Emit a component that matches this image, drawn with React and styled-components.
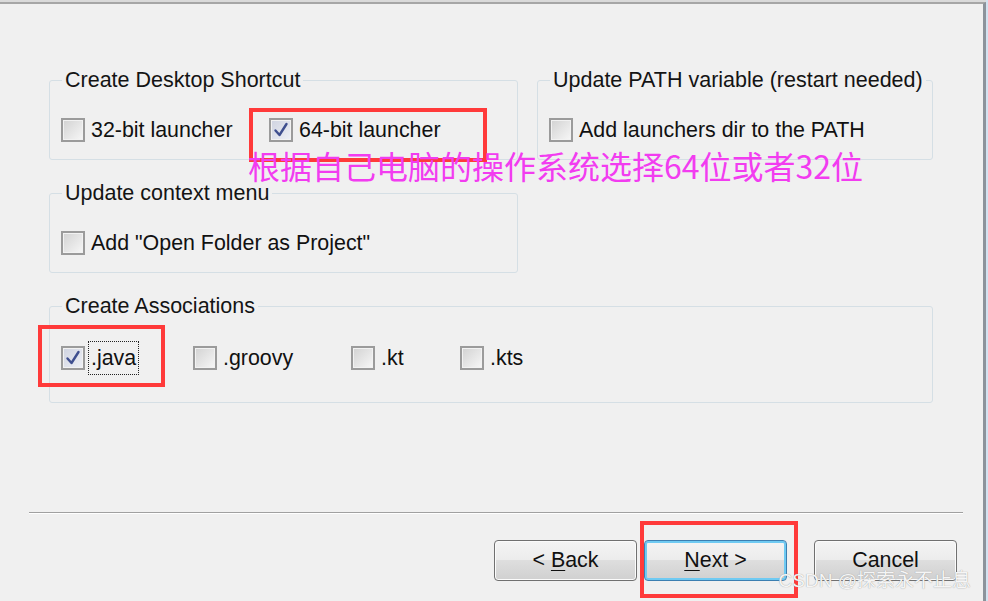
import React from "react";
import styled, { createGlobalStyle, css } from "styled-components";

const GlobalStyle = createGlobalStyle`
  html, body {
    margin: 0;
    padding: 0;
    background: #f0f0f0;
  }
  body {
    font-family: "Liberation Sans", Arial, sans-serif;
  }
`;

// red annotation frame drawn over an item
const marked = css`
  ${props => props.$mark && css`
    &::after {
      content: "";
      position: absolute;
      left: ${props.$mark[0]}px;
      top: ${props.$mark[1]}px;
      width: ${props.$mark[2]}px;
      height: ${props.$mark[3]}px;
      border: 4px solid #ff3a3a;
      box-sizing: border-box;
      pointer-events: none;
    }
  `}
`;

const Frame = styled.div`
  width: 988px;
  height: 601px;
  box-sizing: border-box;
  padding: 2px 2px 0 0;
  background: #d3e2f0;
  display: flex;
  overflow: hidden;
`;

const Window = styled.div`
  position: relative;
  flex: 1;
  display: flex;
  flex-direction: column;
  background: #f0f0f0;
  border-top: 2px solid #a6a6a6;
  border-right: 3px solid #8c939b;
  box-shadow: 0 -2px 0 #dadada;
`;

const Body = styled.div`
  padding: 64px 0 0 49px;
`;

const Groups = styled.div`
  display: grid;
  grid-template-columns: 469px 396px;
  column-gap: 19px;
  row-gap: 21px;
  align-items: start;
`;

const Group = styled.fieldset`
  margin: 0;
  min-width: 0;
  padding: ${props => props.$pad || "21px 11px 12px"};
  border: 1px solid #d5dfe5;
  border-radius: 3px;
  ${props => props.$wide && "grid-column: 1 / -1;"}
`;

const Legend = styled.legend`
  padding: 0 3px;
  margin-left: 1px;
  font-size: 21.5px;
  line-height: 24px;
  color: #141414;
  white-space: nowrap;
`;

const Options = styled.div`
  display: flex;
  align-items: center;
  height: 34px;
`;

const Option = styled.label`
  position: relative;
  display: flex;
  align-items: center;
  flex-shrink: 0;
  height: 34px;
  width: ${props => (props.$w ? `${props.$w}px` : "auto")};
  ${marked}
`;

const Box = styled.span`
  width: 24px;
  height: 24px;
  box-sizing: border-box;
  flex-shrink: 0;
  display: flex;
  align-items: center;
  justify-content: center;
  border: 2px solid #9b9b9b;
  box-shadow: inset 0 0 0 1px #f2f2f2;
  background: ${props =>
    props.$checked
      ? "linear-gradient(135deg, #cfd3e0, #eef0f6)"
      : "linear-gradient(135deg, #d2d2d2, #f7f7f7)"};
`;

const Text = styled.span`
  margin-left: 3px;
  padding: 0 2px;
  height: 32px;
  line-height: 32px;
  border: 1px dotted ${props => (props.$focus ? "#222" : "transparent")};
  font-size: 21.4px;
  color: #111;
  white-space: nowrap;
`;

const Footer = styled.div`
  margin-top: auto;
  display: flex;
  flex-direction: column;
`;

const Divider = styled.div`
  margin: 0 20px 0 29px;
  border-top: 1px solid #a0a0a0;
  border-bottom: 1px solid #ffffff;
`;

const ButtonRow = styled.div`
  display: flex;
  justify-content: flex-end;
  gap: 7px;
  margin: 26px 26px 20px 0;
`;

const Button = styled.button`
  position: relative;
  width: 143px;
  height: 41px;
  padding: 0;
  margin-right: ${props => props.$after || 0}px;
  font-family: "Liberation Sans", Arial, sans-serif;
  font-size: 21.4px;
  color: #111;
  border: 1px solid ${props => (props.$default ? "#3c7fb1" : "#707070")};
  border-radius: 4px;
  background: linear-gradient(#f4f4f4 0%, #ececec 48%, #dedede 50%, #d0d0d0 100%);
  box-shadow: inset 0 0 0 ${props => (props.$default ? "2px #6fcaf2" : "1px #fbfbfb")};
  overflow: visible;
  ${marked}

  u {
    text-decoration-thickness: 1px;
    text-underline-offset: 3px;
  }
`;

const Note = styled.div`
  position: absolute;
  left: 248px;
  top: 145px;
  font-family: "Noto Sans CJK SC", sans-serif;
  font-size: 32px;
  line-height: 32px;
  color: #f23cf0;
  white-space: nowrap;
`;

const Watermark = styled.div`
  position: absolute;
  right: 12px;
  bottom: 9px;
  font-family: "Liberation Sans", "Noto Sans CJK SC", sans-serif;
  font-size: 19px;
  line-height: 22px;
  color: rgba(252, 252, 252, 0.95);
  text-shadow: 0 0 1px #8a8a8a;
  white-space: nowrap;
`;

const Check = () => (
  <svg width="18" height="18" viewBox="0 0 18 18">
    <path d="M3.5 9.5 L7.5 14 L14.5 3" fill="none" stroke="#3f4f8f" strokeWidth="2.4" strokeLinecap="round" strokeLinejoin="round" />
  </svg>
);

const CheckOption = ({ label, checked, focus, w, mark }) => (
  <Option $w={w} $mark={mark}>
    <Box $checked={checked}>{checked && <Check />}</Box>
    <Text $focus={focus}>{label}</Text>
  </Option>
);

export default function App() {
  return (
    <Frame>
      <GlobalStyle />
      <Window>
        <Body>
          <Groups>
            <Group>
              <Legend>Create Desktop Shortcut</Legend>
              <Options>
                <CheckOption label="32-bit launcher" w={208} />
                <CheckOption label="64-bit launcher" checked mark={[-20, -5, 238, 54]} />
              </Options>
            </Group>
            <Group>
              <Legend>Update PATH variable (restart needed)</Legend>
              <Options>
                <CheckOption label="Add launchers dir to the PATH" />
              </Options>
            </Group>
            <Group>
              <Legend>Update context menu</Legend>
              <Options>
                <CheckOption label={'Add "Open Folder as Project"'} />
              </Options>
            </Group>
            <Group $wide $pad="23px 11px 27px">
              <Legend>Create Associations</Legend>
              <Options>
                <CheckOption label=".java" checked focus w={132} mark={[-23, -16, 127, 62]} />
                <CheckOption label=".groovy" w={158} />
                <CheckOption label=".kt" w={109} />
                <CheckOption label=".kts" />
              </Options>
            </Group>
          </Groups>
        </Body>

        <Footer>
          <Divider />
          <ButtonRow>
            <Button>&lt; <u>B</u>ack</Button>
            <Button $default $after={20} $mark={[-5, -20, 158, 77]}>
              <u>N</u>ext &gt;
            </Button>
            <Button>Cancel</Button>
          </ButtonRow>
        </Footer>

        <Note>根据自己电脑的操作系统选择64位或者32位</Note>
        <Watermark>CSDN @探索永不止息</Watermark>
      </Window>
    </Frame>
  );
}
